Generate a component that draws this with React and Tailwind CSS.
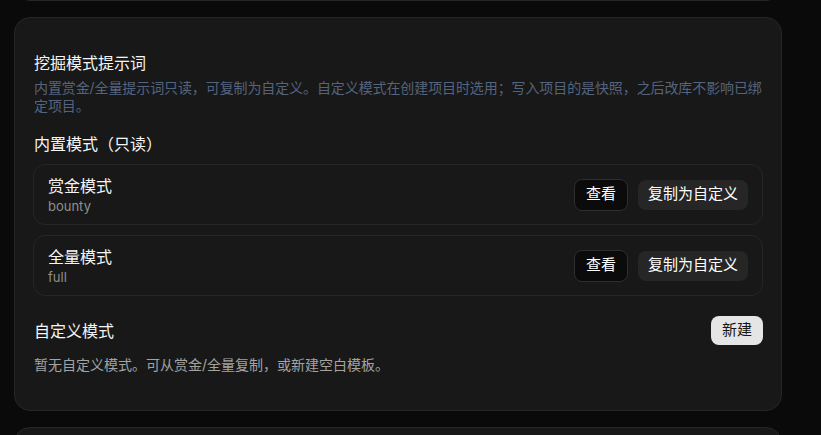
const BUILTIN = [
  { name: '赏金模式', key: 'bounty' },
  { name: '全量模式', key: 'full' },
];

function ModeRow({ name, code }) {
  return (
    <div className="flex items-center justify-between h-[61px] rounded-xl border border-[#262626] pl-[14px] pr-[14px]">
      <div className="flex flex-col">
        <span className="text-[16px] leading-[22px] text-[#f5f5f5]">{name}</span>
        <span className="text-[13px] leading-[18px] text-[#8f8f8f]">{code}</span>
      </div>
      <div className="flex items-center gap-[10px]">
        <button className="h-[32px] px-[11px] rounded-lg border border-[#2e2e2e] bg-[#0b0b0b] text-[15px] text-white">
          查看
        </button>
        <button className="h-[30px] px-[10px] rounded-lg bg-[#262626] text-[15px] text-white">
          复制为自定义
        </button>
      </div>
    </div>
  );
}

export default function App() {
  return (
    <div
      className="min-h-screen bg-[#0a0a0a] overflow-hidden"
      style={{ fontFamily: 'Inter, "Noto Sans CJK SC", sans-serif' }}
    >
      <div className="flex flex-col gap-4 w-[768px] ml-[14px] -mt-[100px]">
        {/* previous card, scrolled out of view */}
        <div className="h-[101px] rounded-2xl border border-[#262626] bg-[#181818]" />

        <div className="rounded-2xl border border-[#262626] bg-[#181818] px-[18px] pt-[33px] pb-[35px]">
          <h2 className="pl-px text-[16px] leading-[24px] text-[#f5f5f5]">挖掘模式提示词</h2>
          <p className="pl-px mt-[4px] text-[14px] leading-[18px] tracking-[-0.1px] text-[#55647e]">
            内置赏金/全量提示词只读，可复制为自定义。自定义模式在创建项目时选用；写入项目的是快照，之后改库不影响已绑定项目。
          </p>

          <h3 className="pl-px mt-[17px] text-[16px] leading-[24px] text-[#f5f5f5]">内置模式（只读）</h3>
          <div className="mt-[8px] flex flex-col gap-[10px]">
            {BUILTIN.map(m => (
              <ModeRow key={m.key} name={m.name} code={m.key} />
            ))}
          </div>

          <div className="mt-[20px] flex items-center justify-between">
            <h3 className="pl-px text-[16px] leading-[24px] text-[#f5f5f5]">自定义模式</h3>
            <button className="h-[29px] px-[11px] rounded-lg bg-[#e5e5e5] text-[15px] text-[#171717]">
              新建
            </button>
          </div>
          <p className="pl-px mt-[10px] text-[14px] leading-[20px] text-[#a3a3a3]">
            暂无自定义模式。可从赏金/全量复制，或新建空白模板。
          </p>
        </div>

        <div className="h-[200px] rounded-2xl border border-[#262626] bg-[#181818]" />
      </div>
    </div>
  );
}
